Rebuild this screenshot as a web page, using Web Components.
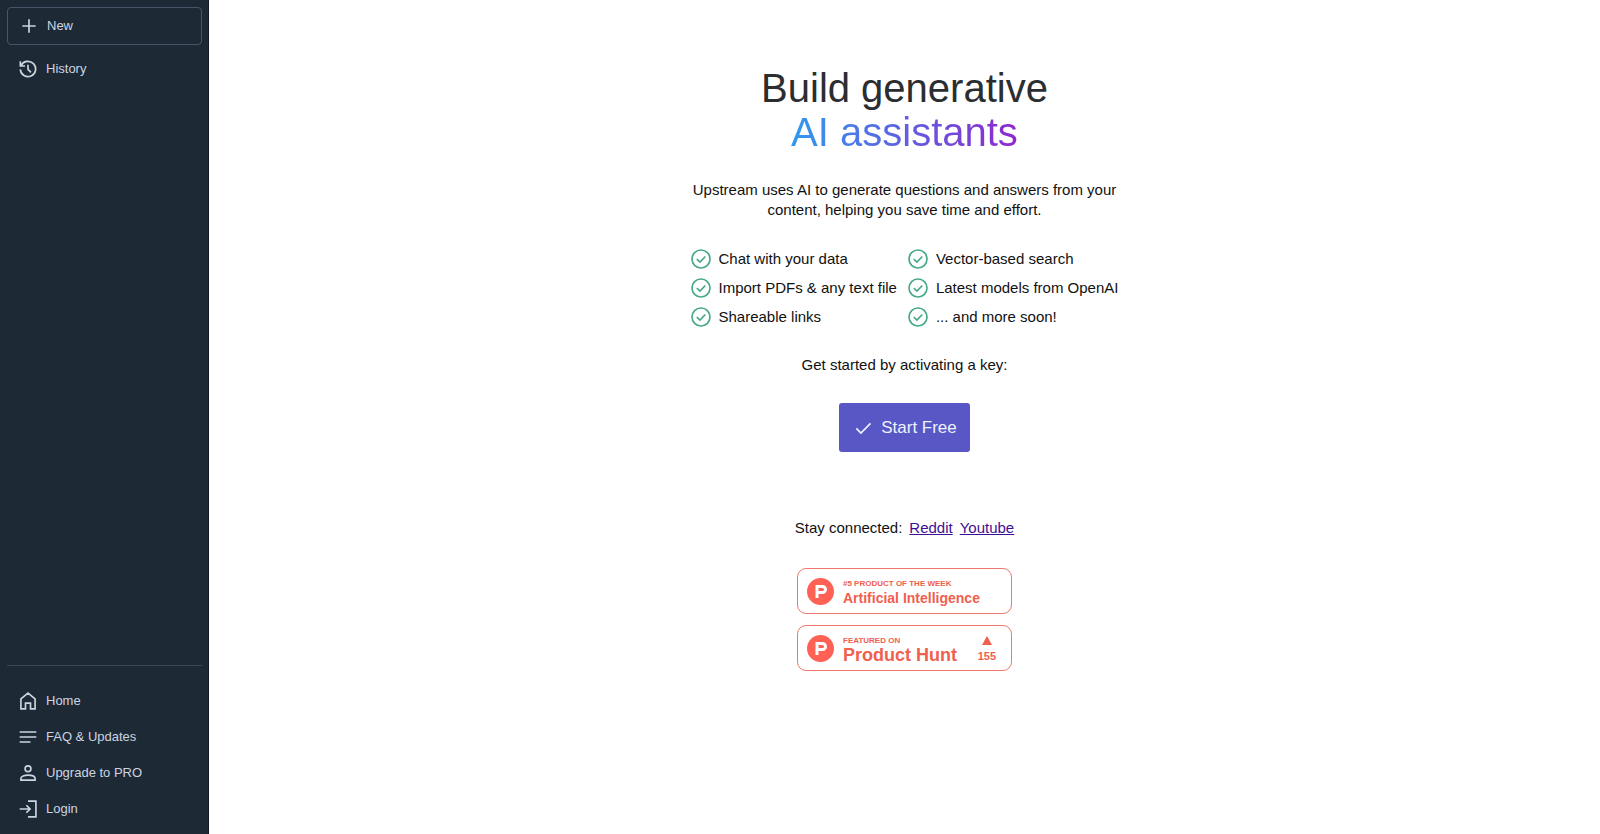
<!DOCTYPE html>
<html lang="en">
<head>
<meta charset="utf-8">
<meta name="viewport" content="width=device-width, initial-scale=1">
<title>Upstream</title>
<style>
  body { margin: 0; background: #fff; color: #111; font: 15px/20px "Liberation Sans", Arial, sans-serif; }
</style>
</head>
<body>
<up-app></up-app>
<script>
const icons = {
  plus: '<path d="M12 4v16M4 12h16"/>',
  history: '<path d="M3.6 8.2A9.2 9.2 0 1 1 2.8 12.5M2.8 2.8v5.6h5.6M12 7v5.5l3.6 3.6"/>',
  home: '<path d="M3.5 9.5 12 2.5l8.5 7V21.5h-5.5v-7H9v7H3.5z"/>',
  lines: '<path d="M2 6h20M2 12h20M2 18h13"/>',
  person: '<circle cx="12" cy="7" r="3.5"/><path d="M3.5 20.5v-1.8c0-2.8 4.3-4.2 8.5-4.2s8.5 1.4 8.5 4.2v1.8z"/>',
  login: '<path d="M12 2.5h9.5v19H12M2 12h12M10 7.5l4.5 4.5-4.5 4.5"/>',
  check: '<path d="M4 12.5l5.5 5.5L21 6.5"/>',
  circleCheck: '<circle cx="12" cy="12" r="10.8"/><path d="M7 12.2l3.7 3.6 6.5-6.8"/>'
};

function define(name, html) {
  const template = document.createElement('template');
  template.innerHTML = html;
  customElements.define(name, class extends HTMLElement {
    connectedCallback() {
      if (this.shadowRoot) return;
      const root = this.attachShadow({ mode: 'open' });
      root.append(template.content.cloneNode(true));
      root.querySelectorAll('[data-from]').forEach(el => {
        el.textContent = this.getAttribute(el.dataset.from) || '';
      });
      const svg = root.querySelector('svg[data-icon]');
      if (svg) svg.innerHTML = icons[this.getAttribute('icon') || svg.dataset.icon];
    }
  });
}

const stroke = 'viewBox="0 0 24 24" fill="none" stroke="currentColor" aria-hidden="true"';

define('nav-item', `
  <style>
    :host { display: block; font-size: 13px; }
    button { display: flex; align-items: center; gap: 8px; width: 100%; height: 36px; margin: 0;
      padding: 0 10px; border: 1px solid transparent; border-radius: 4px; background: none;
      color: #cbd5e1; font: inherit; text-align: left; cursor: pointer; }
    :host([outlined]) button { height: 38px; padding: 0 11px; border-color: #475569; }
    svg { width: 20px; height: 20px; stroke-width: 2; flex: none; }
  </style>
  <button type="button"><svg ${stroke} data-icon="plus"></svg><slot></slot></button>`);

define('side-bar', `
  <style>
    :host { display: flex; flex-direction: column; box-sizing: border-box; width: 209px; flex: none;
      padding: 7px 6px 7px 7px; background: #1e2936; border-right: 1px solid #111820; }
    nav { display: block; }
    .top { display: grid; gap: 6px; }
    .bottom { margin-top: auto; padding-top: 17px; border-top: 1px solid #3a4756; }
  </style>
  <nav class="top" aria-label="Conversations">
    <nav-item icon="plus" outlined>New</nav-item>
    <nav-item icon="history">History</nav-item>
  </nav>
  <nav class="bottom" aria-label="Site">
    <nav-item icon="home">Home</nav-item>
    <nav-item icon="lines">FAQ &amp; Updates</nav-item>
    <nav-item icon="person">Upgrade to PRO</nav-item>
    <nav-item icon="login">Login</nav-item>
  </nav>`);

define('feature-item', `
  <style>
    :host { display: flex; align-items: center; gap: 8px; height: 22px; white-space: nowrap; }
    svg { width: 20px; height: 20px; color: #45a987; stroke-width: 2; flex: none; }
  </style>
  <svg ${stroke} data-icon="circleCheck"></svg><slot></slot>`);

define('start-button', `
  <style>
    :host { display: block; }
    button { display: flex; align-items: center; gap: 8px; height: 49px; padding: 0 13px 0 14px; border: 0;
      border-radius: 3px; background: #5857c5; color: #eef2ff; font: inherit; font-size: 17px; cursor: pointer; }
    svg { width: 20px; height: 20px; stroke-width: 2; }
  </style>
  <button type="button"><svg ${stroke} data-icon="check"></svg><slot></slot></button>`);

define('hunt-badge', `
  <style>
    :host { display: block; font-family: "Liberation Sans", Arial, sans-serif; font-weight: bold; }
    a { display: flex; align-items: center; box-sizing: border-box; width: 215px; height: 46px;
      padding: 0 15px 0 9px; border: 1px solid #f0776c; border-radius: 9px; color: #f0604f; text-decoration: none; }
    .logo { width: 27px; height: 27px; flex: none; margin-right: 9px; }
    .words { display: grid; flex: 1; padding-top: 5px; white-space: nowrap; }
    .label { font-size: 8px; line-height: 8px; }
    .name { font-size: 14px; line-height: 20px; }
    :host([votes]) .name { font-size: 18px; line-height: 20px; }
    .votes { display: none; font-size: 11px; line-height: 14px; text-align: center; }
    :host([votes]) .votes { display: grid; justify-items: center; gap: 4px; padding-top: 2px; }
    .votes svg { width: 10px; height: 9px; }
  </style>
  <a href="#">
    <svg class="logo" viewBox="0 0 27 27" aria-hidden="true"><circle cx="13.5" cy="13.5" r="13.5" fill="#ff6154"/>
      <path fill="#fff" fill-rule="evenodd" d="M8.5 7h7a4.5 4.5 0 0 1 0 9h-4v4h-3zm3 3v3h4a1.5 1.5 0 0 0 0-3z"/></svg>
    <span class="words"><span class="label" data-from="label"></span><span class="name"><slot></slot></span></span>
    <span class="votes"><svg viewBox="0 0 10 9" aria-hidden="true"><path fill="currentColor" d="M5 0l5 9H0z"/></svg><span data-from="votes"></span></span>
  </a>`);

define('welcome-page', `
  <style>
    :host { display: flex; flex-direction: column; align-items: center; flex: 1; min-width: 0;
      box-sizing: border-box; padding: 66px 16px; text-align: center; }
    h1 { margin: 0; font-size: 40px; line-height: 44px; font-weight: normal; color: #2b2d31; }
    h1 span { display: block; width: fit-content; margin: 0 auto; color: transparent;
      background: linear-gradient(90deg, #3199f0, #9026cf); background-clip: text; -webkit-background-clip: text; }
    p { margin: 0; }
    .intro { max-width: 440px; margin-top: 26px; }
    .features { display: grid; grid-template-columns: auto auto; gap: 7px 11px; margin-top: 28px; text-align: left; }
    .key { margin-top: 27px; }
    start-button { margin-top: 28px; }
    .social { display: flex; gap: 7px; margin-top: 66px; }
    .social a { color: #3f0f94; }
    .badges { display: grid; gap: 11px; margin-top: 30px; text-align: left; }
  </style>
  <h1>Build generative <span>AI assistants</span></h1>
  <p class="intro">Upstream uses AI to generate questions and answers from your content, helping you save time and effort.</p>
  <div class="features">
    <feature-item>Chat with your data</feature-item><feature-item>Vector-based search</feature-item>
    <feature-item>Import PDFs &amp; any text file</feature-item><feature-item>Latest models from OpenAI</feature-item>
    <feature-item>Shareable links</feature-item><feature-item>... and more soon!</feature-item>
  </div>
  <p class="key">Get started by activating a key:</p>
  <start-button>Start Free</start-button>
  <p class="social"><span>Stay connected:</span><a href="#reddit">Reddit</a><a href="#youtube">Youtube</a></p>
  <div class="badges">
    <hunt-badge label="#5 PRODUCT OF THE WEEK">Artificial Intelligence</hunt-badge>
    <hunt-badge label="FEATURED ON" votes="155">Product Hunt</hunt-badge>
  </div>`);

define('up-app', `
  <style>:host { display: flex; min-height: 100vh; } main { display: flex; flex: 1; min-width: 0; }</style>
  <side-bar></side-bar><main><welcome-page></welcome-page></main>`);
</script>
</body>
</html>
